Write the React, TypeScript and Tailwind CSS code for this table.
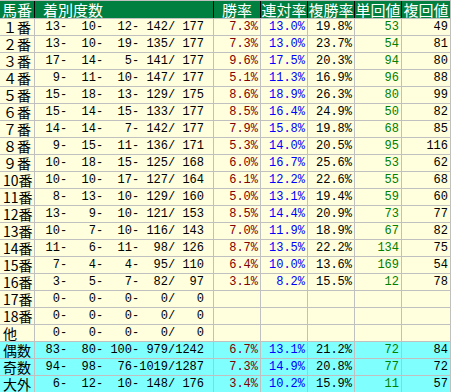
const heads = ["馬番", "着別度数", "勝率", "連対率", "複勝率", "単回値", "複回値"];

type Row = {
	label: string;
	counts: number[];
	win?: string;
	place?: string;
	show?: string;
	tan?: string;
	fuku?: string;
	odd?: boolean;
};

const fw = ["０", "１", "２", "３", "４", "５", "６", "７", "８", "９"];

const raw: [string, number[], string?, string?, string?, string?, string?][] = [
	["1", [13, 10, 12, 142, 177], "7.3", "13.0", "19.8", "53", "49"],
	["2", [13, 10, 19, 135, 177], "7.3", "13.0", "23.7", "54", "81"],
	["3", [17, 14, 5, 141, 177], "9.6", "17.5", "20.3", "94", "80"],
	["4", [9, 11, 10, 147, 177], "5.1", "11.3", "16.9", "96", "88"],
	["5", [15, 18, 13, 129, 175], "8.6", "18.9", "26.3", "80", "99"],
	["6", [15, 14, 15, 133, 177], "8.5", "16.4", "24.9", "50", "82"],
	["7", [14, 14, 7, 142, 177], "7.9", "15.8", "19.8", "68", "85"],
	["8", [9, 15, 11, 136, 171], "5.3", "14.0", "20.5", "95", "116"],
	["9", [10, 18, 15, 125, 168], "6.0", "16.7", "25.6", "53", "62"],
	["10", [10, 10, 17, 127, 164], "6.1", "12.2", "22.6", "55", "68"],
	["11", [8, 13, 10, 129, 160], "5.0", "13.1", "19.4", "59", "60"],
	["12", [13, 9, 10, 121, 153], "8.5", "14.4", "20.9", "73", "77"],
	["13", [10, 7, 10, 116, 143], "7.0", "11.9", "18.9", "67", "82"],
	["14", [11, 6, 11, 98, 126], "8.7", "13.5", "22.2", "134", "75"],
	["15", [7, 4, 4, 95, 110], "6.4", "10.0", "13.6", "169", "54"],
	["16", [3, 5, 7, 82, 97], "3.1", "8.2", "15.5", "12", "78"],
	["17", [0, 0, 0, 0, 0]],
	["18", [0, 0, 0, 0, 0]],
];

const rows: Row[] = [
	...raw.map(([n, counts, win, place, show, tan, fuku]) => ({
		label: (n.length === 1 ? fw[Number(n)] : n) + "番",
		counts,
		win,
		place,
		show,
		tan,
		fuku,
	})),
	{ label: "他", counts: [0, 0, 0, 0, 0] },
	{ label: "偶数", counts: [83, 80, 100, 979, 1242], win: "6.7", place: "13.1", show: "21.2", tan: "72", fuku: "84", odd: true },
	{ label: "奇数", counts: [94, 98, 76, 1019, 1287], win: "7.3", place: "14.9", show: "20.8", tan: "77", fuku: "72", odd: true },
	{ label: "大外", counts: [6, 12, 10, 148, 176], win: "3.4", place: "10.2", show: "15.9", tan: "11", fuku: "57", odd: true },
];

const pad = (n: number) => String(n).padStart(4, " ");
const countText = (c: number[]) =>
	`${pad(c[0])}-${pad(c[1])}-${pad(c[2])}-${pad(c[3])}/${pad(c[4])}`;

const cols = "grid grid-cols-[34px_178px_46px_46px_46px_46px_48px] auto-rows-[16px] gap-px";
const jp = "font-['Noto_Sans_CJK_JP',sans-serif] leading-none";
const num = "font-['Liberation_Mono',monospace] text-[12px] leading-none whitespace-pre justify-end pr-[2px]";

export default function App() {
	return (
		<div className="w-[451px] h-[392px] overflow-hidden bg-[#c0c0c0] pt-px pr-px flex flex-col gap-px">
			<div className="grid grid-cols-[34px_178px_46px_46px_46px_46px_48px] h-[18px] gap-x-px bg-black">
				{heads.map((h, i) => (
					<div
						key={h}
						className={`flex items-center bg-[#008040] text-white text-[15px] ${jp} ${
							i === 0 ? "pl-[2px]" : i === 1 ? "pl-[8px]" : "justify-center"
						}`}
					>
						{h}
					</div>
				))}
			</div>
			<div className={cols}>
				{rows.map((r) => {
					const bg = r.odd ? "bg-[#80ffff]" : "bg-[#ffffdd]";
					const cell = `${bg} flex items-center`;
					return [
						<div key={r.label + "l"} className={`${cell} ${jp} text-[14px] pl-[3px] text-black`}>
							{r.label}
						</div>,
						<div key={r.label + "c"} className={`${cell} ${num} pr-[9px] text-black`}>
							{countText(r.counts)}
						</div>,
						<div key={r.label + "w"} className={`${cell} ${num} text-[#800000]`}>
							{r.win ? r.win + "%" : ""}
						</div>,
						<div key={r.label + "p"} className={`${cell} ${num} text-[#0000ff]`}>
							{r.place ? r.place + "%" : ""}
						</div>,
						<div key={r.label + "s"} className={`${cell} ${num} text-black`}>
							{r.show ? r.show + "%" : ""}
						</div>,
						<div key={r.label + "t"} className={`${cell} ${num} text-[#008000]`}>
							{r.tan ?? ""}
						</div>,
						<div key={r.label + "f"} className={`${cell} ${num} text-black`}>
							{r.fuku ?? ""}
						</div>,
					];
				})}
			</div>
		</div>
	);
}
